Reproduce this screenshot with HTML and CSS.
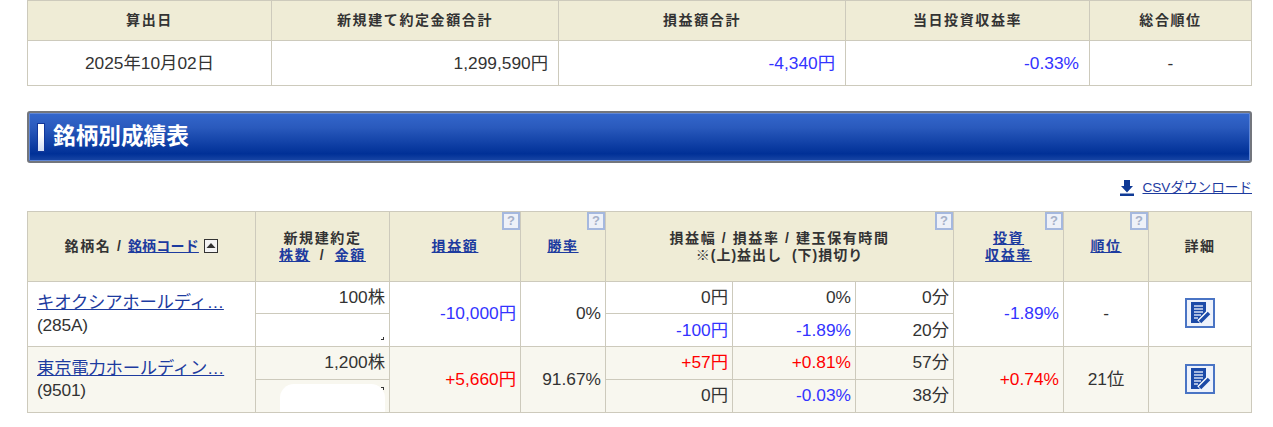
FILE: index.html
```html
<!DOCTYPE html>
<html lang="ja">
<head>
<meta charset="utf-8">
<title>銘柄別成績表</title>
<link rel="stylesheet" href="styles.css">
</head>
<body>
<main class="page">
  <table class="grid summary">
    <colgroup><col class="s1"><col class="s2"><col class="s3"><col class="s4"><col class="s5"></colgroup>
    <thead>
      <tr><th>算出日</th><th>新規建て約定金額合計</th><th>損益額合計</th><th>当日投資収益率</th><th>総合順位</th></tr>
    </thead>
    <tbody>
      <tr><td class="c">2025年10月02日</td><td class="r">1,299,590円</td><td class="r neg">-4,340円</td><td class="r neg">-0.33%</td><td class="c">-</td></tr>
    </tbody>
  </table>

  <h2 class="title"><span class="title-mark"></span><span class="title-text">銘柄別成績表</span></h2>

  <div class="csv">
    <svg class="csv-icon" width="14" height="16" viewBox="0 0 14 16"><path fill="#0f3a96" d="M4 0h6v6h3L7 12.500 1 6h3z"/><rect y="13.500" width="14" height="2.500" fill="#0f3a96"/></svg>
    <a href="#">CSVダウンロード</a>
  </div>

  <div class="results-wrap">
    <table class="grid results">
      <colgroup><col class="m1"><col class="m2"><col class="m3"><col class="m4"><col class="m5"><col class="m6"><col class="m7"><col class="m8"><col class="m9"><col class="m10"></colgroup>
      <thead>
        <tr>
          <th>銘柄名 / <a class="code-link" href="#">銘柄コード</a> <svg class="sort" width="14" height="14" viewBox="0 0 14 14"><rect x=".5" y=".5" width="13" height="13" fill="#f4f4f4" stroke="#333"/><path d="M7 4l4.500 5h-9z" fill="#333"/></svg></th>
          <th>新規建約定<br><span class="pair"><a href="#">株数</a> / <a href="#">金額</a></span></th>
          <th class="has-help"><a href="#">損益額</a><span class="help">?</span></th>
          <th class="has-help"><a href="#">勝率</a><span class="help">?</span></th>
          <th colspan="3" class="has-help">損益幅 / 損益率 / 建玉保有時間<br><span class="note">※(上)益出し &nbsp;(下)損切り</span><span class="help">?</span></th>
          <th class="has-help"><a href="#">投資<br>収益率</a><span class="help">?</span></th>
          <th class="has-help"><a href="#">順位</a><span class="help">?</span></th>
          <th>詳細</th>
        </tr>
      </thead>
      <tbody>
        <tr class="row-a">
          <td rowspan="2" class="name"><a href="#">キオクシアホールディ…</a><br>(285A)</td>
          <td class="r">100株</td>
          <td rowspan="2" class="r neg">-10,000円</td>
          <td rowspan="2" class="r">0%</td>
          <td class="r">0円</td><td class="r">0%</td><td class="r">0分</td>
          <td rowspan="2" class="r neg">-1.89%</td>
          <td rowspan="2" class="c">-</td>
          <td rowspan="2" class="c"><a class="detail" href="#" aria-label="詳細"><svg width="22" height="24" viewBox="0 0 22 24"><path fill="#1c4aa8" d="M2 1h15v13l-6 8H2z"/><path stroke="#d5def2" stroke-width="1.300" d="M5 5h9M5 8h9M5 11h9M5 14h7M5 17h4"/><path stroke="#fff" stroke-width="5" d="M10 21l9-9"/><path stroke="#1c4aa8" stroke-width="3.500" d="M11 21l9-9"/></svg></a></td>
        </tr>
        <tr class="row-b">
          <td class="r masked"><span class="speck speck-a"></span></td>
          <td class="r neg">-100円</td><td class="r neg">-1.89%</td><td class="r">20分</td>
        </tr>
        <tr class="row-a alt">
          <td rowspan="2" class="name"><a href="#">東京電力ホールディン…</a><br>(9501)</td>
          <td class="r">1,200株</td>
          <td rowspan="2" class="r pos">+5,660円</td>
          <td rowspan="2" class="r">91.67%</td>
          <td class="r pos">+57円</td><td class="r pos">+0.81%</td><td class="r">57分</td>
          <td rowspan="2" class="r pos">+0.74%</td>
          <td rowspan="2" class="c">21位</td>
          <td rowspan="2" class="c"><a class="detail" href="#" aria-label="詳細"><svg width="22" height="24" viewBox="0 0 22 24"><path fill="#1c4aa8" d="M2 1h15v13l-6 8H2z"/><path stroke="#d5def2" stroke-width="1.300" d="M5 5h9M5 8h9M5 11h9M5 14h7M5 17h4"/><path stroke="#fff" stroke-width="5" d="M10 21l9-9"/><path stroke="#1c4aa8" stroke-width="3.500" d="M11 21l9-9"/></svg></a></td>
        </tr>
        <tr class="row-b alt">
          <td class="r masked"><span class="blob"></span><span class="speck speck-b"></span></td>
          <td class="r">0円</td><td class="r neg">-0.03%</td><td class="r">38分</td>
        </tr>
      </tbody>
    </table>
  </div>
</main>
</body>
</html>
```
FILE: styles.css
```css
* { box-sizing: border-box; }
html, body { margin: 0; background: #fff; }
body {
  font-family: "Liberation Sans", "Noto Sans CJK JP", sans-serif;
  color: #333;
  font-size: 17.33px;
  line-height: 20px;
}
.page { padding: 0 21px 0 27px; }
a { color: #1d3b9f; }
.grid {
  width: 1224px;
  table-layout: fixed;
  border-collapse: collapse;
}
.grid th, .grid td { border: 1px solid #cdcabc; padding: 0 10px; }
.grid th {
  background: #efecd6;
  font-size: 14px;
  font-weight: bold;
  letter-spacing: 1.6px;
  line-height: 17px;
  text-align: center;
}
.c { text-align: center; }
.r { text-align: right; }
.neg { color: #3333ff; }
.pos { color: #ff0000; }

.s1 { width: 244px; } .s2 { width: 287px; } .s3 { width: 287px; } .s4 { width: 244px; } .s5 { width: 162px; }
.summary thead tr { height: 40px; }
.summary tbody tr { height: 45px; }

.title {
  display: flex;
  align-items: center;
  margin: 25px 0 0;
  height: 52px;
  padding-left: 8px;
  border: 2px solid #73767d;
  border-radius: 3px;
  background: linear-gradient(#3467cc, #2a5abd 30%, #003097 85%, #1a47a5);
  box-shadow: inset 0 0 0 1px #5f86d6;
  color: #fff;
  font-size: 22.67px;
  font-weight: bold;
  line-height: 1;
}
.title-text { padding-bottom: 2px; }
.title-mark {
  width: 8px;
  height: 29px;
  margin-right: 8px;
  border: 1px solid #12379a;
  background: linear-gradient(#fff 40%, #cfdcf4);
}

.csv {
  display: flex;
  justify-content: flex-end;
  align-items: center;
  gap: 8px;
  height: 16px;
  margin-top: 17px;
  font-size: 13.6px;
}
.csv a { line-height: 16px; }
.csv-icon { display: block; }

.results-wrap { margin-top: 15px; position: relative; }
.m1 { width: 228px; } .m2 { width: 134px; } .m3 { width: 131px; } .m4 { width: 85px; }
.m5 { width: 127px; } .m6 { width: 123px; } .m7 { width: 98px; } .m8 { width: 110px; }
.m9 { width: 85px; } .m10 { width: 103px; }
.results thead tr { height: 70px; }
.results .row-a { height: 32px; }
.results .row-b { height: 33px; }
.results .row-a.alt { height: 33px; }
.results td { padding: 0 4px; }
.results .row-a td, .results .row-b.alt td { padding-bottom: 2px; }
.results .row-a td.name { padding: 0 9px; line-height: 23px; letter-spacing: -0.2px; }
.results .row-a.alt td.name { padding-bottom: 2px; line-height: 22px; }
.alt td { background: #f8f7ef; }

.code-link { letter-spacing: 0.2px; }
.pair { word-spacing: 4px; }
.note { letter-spacing: 1px; }

.has-help { position: relative; }
.help {
  position: absolute;
  top: 0;
  right: 0;
  width: 18px;
  height: 18px;
  border: 2px solid #a5b8de;
  background: #eef1f8;
  color: #a5b0c8;
  font: bold 13px/14px "Liberation Sans", sans-serif;
  letter-spacing: 0;
  text-align: center;
}
.sort { vertical-align: -2px; }

.detail {
  display: inline-flex;
  align-items: center;
  justify-content: center;
  width: 30px;
  height: 30px;
  border: 2px solid #4a74c4;
  background: #eef2fb;
  vertical-align: middle;
}
.detail svg { display: block; }

.masked { position: relative; overflow: hidden; }
.blob {
  position: absolute;
  left: 24px;
  top: 4px;
  width: 105px;
  height: 40px;
  border-radius: 14px;
  background: #fff;
}
.speck {
  position: absolute;
  right: 5px;
  width: 3px;
  height: 3px;
  border-top: 1px solid #333;
  border-right: 1px solid #333;
}
.speck-a { bottom: 6px; border-top: 0; border-bottom: 1px solid #333; }
.speck-b { top: 7px; }
```
